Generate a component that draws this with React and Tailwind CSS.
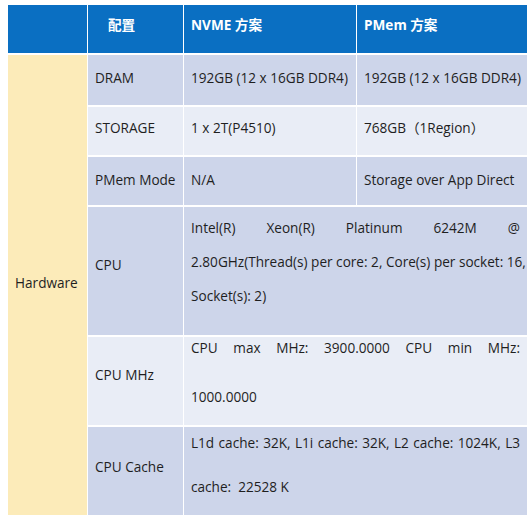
const font = {
  fontFamily: '"Open Sans", "Noto Sans CJK SC", sans-serif',
};

// one cell of the grid: bg colour + vertical nudge
function Cell({ bg, className = "", children }) {
  return (
    <div className={`flex items-center px-[7px] whitespace-nowrap text-[13.6px] text-[#1f1f1f] ${bg} ${className}`}>
      {children}
    </div>
  );
}

// explicit lines so the justified wrapping matches the reference
function Lines({ lines, gap, className = "" }) {
  return (
    <div className={`flex flex-col w-full ${className}`} style={{ rowGap: gap }}>
      {lines.map((l, i) => (
        <div
          key={i}
          className={`leading-[20px] whitespace-pre ${i < lines.length - 1 ? "text-justify [text-align-last:justify]" : ""}`}
        >
          {l}
        </div>
      ))}
    </div>
  );
}

export default function App() {
  const dark = "bg-[#cdd5ea]";
  const light = "bg-[#e9edf6]";

  return (
    <div className="w-[529px] h-[520px] bg-white pt-[5px] pl-[8px]" style={font}>
      <div className="grid grid-cols-[79px_95px_172px_170px] grid-rows-[48px_50px_48px_48px_128px_88px_88px] gap-x-[1px] gap-y-[2px]">
        {/* header */}
        <div className="bg-[#0a6fc2]" />
        <Cell bg="bg-[#0a6fc2]" className="pb-[8px] pl-[20px] text-white font-bold">配置</Cell>
        <Cell bg="bg-[#0a6fc2]" className="pb-[8px] text-white font-bold">NVME 方案</Cell>
        <Cell bg="bg-[#0a6fc2]" className="pb-[8px] text-white font-bold">PMem 方案</Cell>

        {/* hardware spans all body rows */}
        <Cell bg="bg-[#fcebb9]" className="row-span-6 pb-[4px]">Hardware</Cell>

        <Cell bg={dark} className="pb-[4px]">DRAM</Cell>
        <Cell bg={dark} className="pb-[4px]">192GB (12 x 16GB DDR4)</Cell>
        <Cell bg={dark} className="pb-[4px]">192GB (12 x 16GB DDR4)</Cell>

        <Cell bg={light} className="pb-[6px]">STORAGE</Cell>
        <Cell bg={light} className="pb-[6px]">1 x 2T(P4510)</Cell>
        <Cell bg={light} className="pb-[6px]">768GB（1Region）</Cell>

        <Cell bg={dark} className="pb-[2px]">PMem Mode</Cell>
        <Cell bg={dark} className="pb-[2px]">N/A</Cell>
        <Cell bg={dark} className="pb-[2px]">Storage over App Direct</Cell>

        <Cell bg={dark} className="pb-[12px]">CPU</Cell>
        <Cell bg={dark} className="col-span-2 items-start pt-[11px]">
          <Lines
            gap="14px"
            lines={[
              "Intel(R) Xeon(R) Platinum 6242M @",
              "2.80GHz(Thread(s) per core: 2, Core(s) per socket: 16,",
              "Socket(s): 2)",
            ]}
          />
        </Cell>

        <Cell bg={light} className="pb-[12px]">CPU MHz</Cell>
        <Cell bg={light} className="col-span-2 items-start pt-[1px]">
          <Lines
            gap="29px"
            lines={["CPU max MHz: 3900.0000 CPU min MHz:", "1000.0000"]}
          />
        </Cell>

        <Cell bg={dark} className="pb-[8px]">CPU Cache</Cell>
        <Cell bg={dark} className="col-span-2 items-start pt-[6px]">
          <Lines
            gap="24px"
            lines={["L1d cache: 32K, L1i cache: 32K, L2 cache: 1024K, L3", "cache:  22528 K"]}
          />
        </Cell>
      </div>
    </div>
  );
}
